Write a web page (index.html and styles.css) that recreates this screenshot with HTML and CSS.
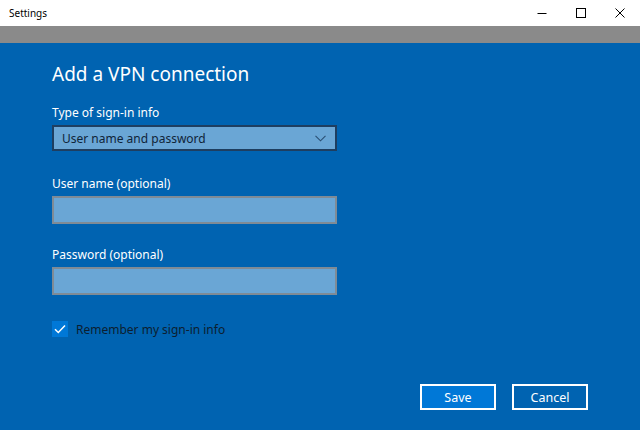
FILE: index.html
```html
<!DOCTYPE html>
<html>
<head>
<meta charset="utf-8">
<link rel="stylesheet" href="styles.css">
</head>
<body>
<div class="window">
  <div class="titlebar">
    <span class="title">Settings</span>
    <div class="controls">
      <span class="ctl"><svg width="10" height="10" viewBox="0 0 10 10"><path d="M0.5 5.5H9.5" stroke="#000" stroke-width="1"/></svg></span>
      <span class="ctl"><svg width="10" height="10" viewBox="0 0 10 10"><rect x="0.5" y="0.5" width="9" height="9" fill="none" stroke="#000" stroke-width="1"/></svg></span>
      <span class="ctl"><svg width="10" height="10" viewBox="0 0 10 10"><path d="M0.5 0.5L9.5 9.5M9.5 0.5L0.5 9.5" stroke="#000" stroke-width="1"/></svg></span>
    </div>
  </div>
  <div class="graybar"></div>
  <div class="content">
    <h1 class="heading">Add a VPN connection</h1>
    <div class="field first">
      <div class="label">Type of sign-in info</div>
      <div class="select">
        <span>User name and password</span>
        <svg class="chev" width="11" height="7" viewBox="0 0 11 7"><path d="M0.5 0.8L5.5 5.8L10.5 0.8" fill="none" stroke="#2a4f73" stroke-width="1.1"/></svg>
      </div>
    </div>
    <div class="field second">
      <div class="label">User name (optional)</div>
      <div class="input"></div>
    </div>
    <div class="field">
      <div class="label">Password (optional)</div>
      <div class="input"></div>
    </div>
    <div class="check-row">
      <span class="checkbox"><svg width="16" height="16" viewBox="0 0 16 16"><path d="M3 8.2L6.3 11.5L13 4.5" fill="none" stroke="#fff" stroke-width="1.5"/></svg></span>
      <span class="check-label">Remember my sign-in info</span>
    </div>
    <div class="buttons">
      <button class="btn primary">Save</button>
      <button class="btn">Cancel</button>
    </div>
  </div>
</div>
</body>
</html>
```
FILE: styles.css
```css
html, body {
  margin: 0;
  padding: 0;
}
body {
  width: 640px;
  height: 430px;
  overflow: hidden;
  font-family: "Noto Sans", "Open Sans", sans-serif;
}
.window {
  display: flex;
  flex-direction: column;
  height: 430px;
}
.titlebar {
  height: 26px;
  background: #fff;
  display: flex;
  align-items: center;
  justify-content: space-between;
}
.title {
  font-size: 10px;
  color: #000;
  padding-left: 9px;
}
.controls {
  display: flex;
  height: 26px;
  padding-right: 1px;
}
.ctl {
  width: 39px;
  display: flex;
  align-items: center;
  justify-content: center;
}
.graybar {
  height: 17px;
  background: #8a8a8a;
}
.content {
  flex: 1;
  background: #0063b1;
  padding: 0 52px;
  display: flex;
  flex-direction: column;
  color: #fff;
}
.heading {
  margin: 18px 0 0 0;
  font-size: 19px;
  font-weight: normal;
  line-height: 27px;
}
.field {
  display: flex;
  flex-direction: column;
  margin-top: 22px;
  width: 285px;
}
.field.first {
  margin-top: 16px;
}
.field.second {
  margin-top: 24px;
}
.label {
  font-size: 12px;
  line-height: 18px;
  margin-bottom: 3px;
}
.select {
  height: 22px;
  border: 2px solid #1e3e60;
  background: #6aa6d5;
  display: flex;
  align-items: center;
  justify-content: space-between;
  padding: 0 8px 0 8px;
  color: #0f2438;
  font-size: 12px;
}
.chev {
  margin-right: 1px;
}
.input {
  height: 24px;
  border: 2px solid #7f8b96;
  background: #6aa6d5;
}
.check-row {
  display: flex;
  align-items: center;
  margin-top: 25px;
  height: 18px;
  gap: 8px;
}
.checkbox {
  width: 16px;
  height: 16px;
  background: #0078d7;
  display: flex;
}
.check-label {
  font-size: 12px;
  color: #0c1e30;
}
.buttons {
  display: flex;
  justify-content: flex-end;
  gap: 16px;
  margin-top: auto;
  margin-bottom: 20px;
}
.btn {
  width: 76px;
  height: 26px;
  border: 2px solid #fff;
  background: #0063b1;
  color: #fff;
  font-family: "Noto Sans", "Open Sans", sans-serif;
  font-size: 12.5px;
  padding: 0;
}
.btn.primary {
  background: #0078d7;
}
```
